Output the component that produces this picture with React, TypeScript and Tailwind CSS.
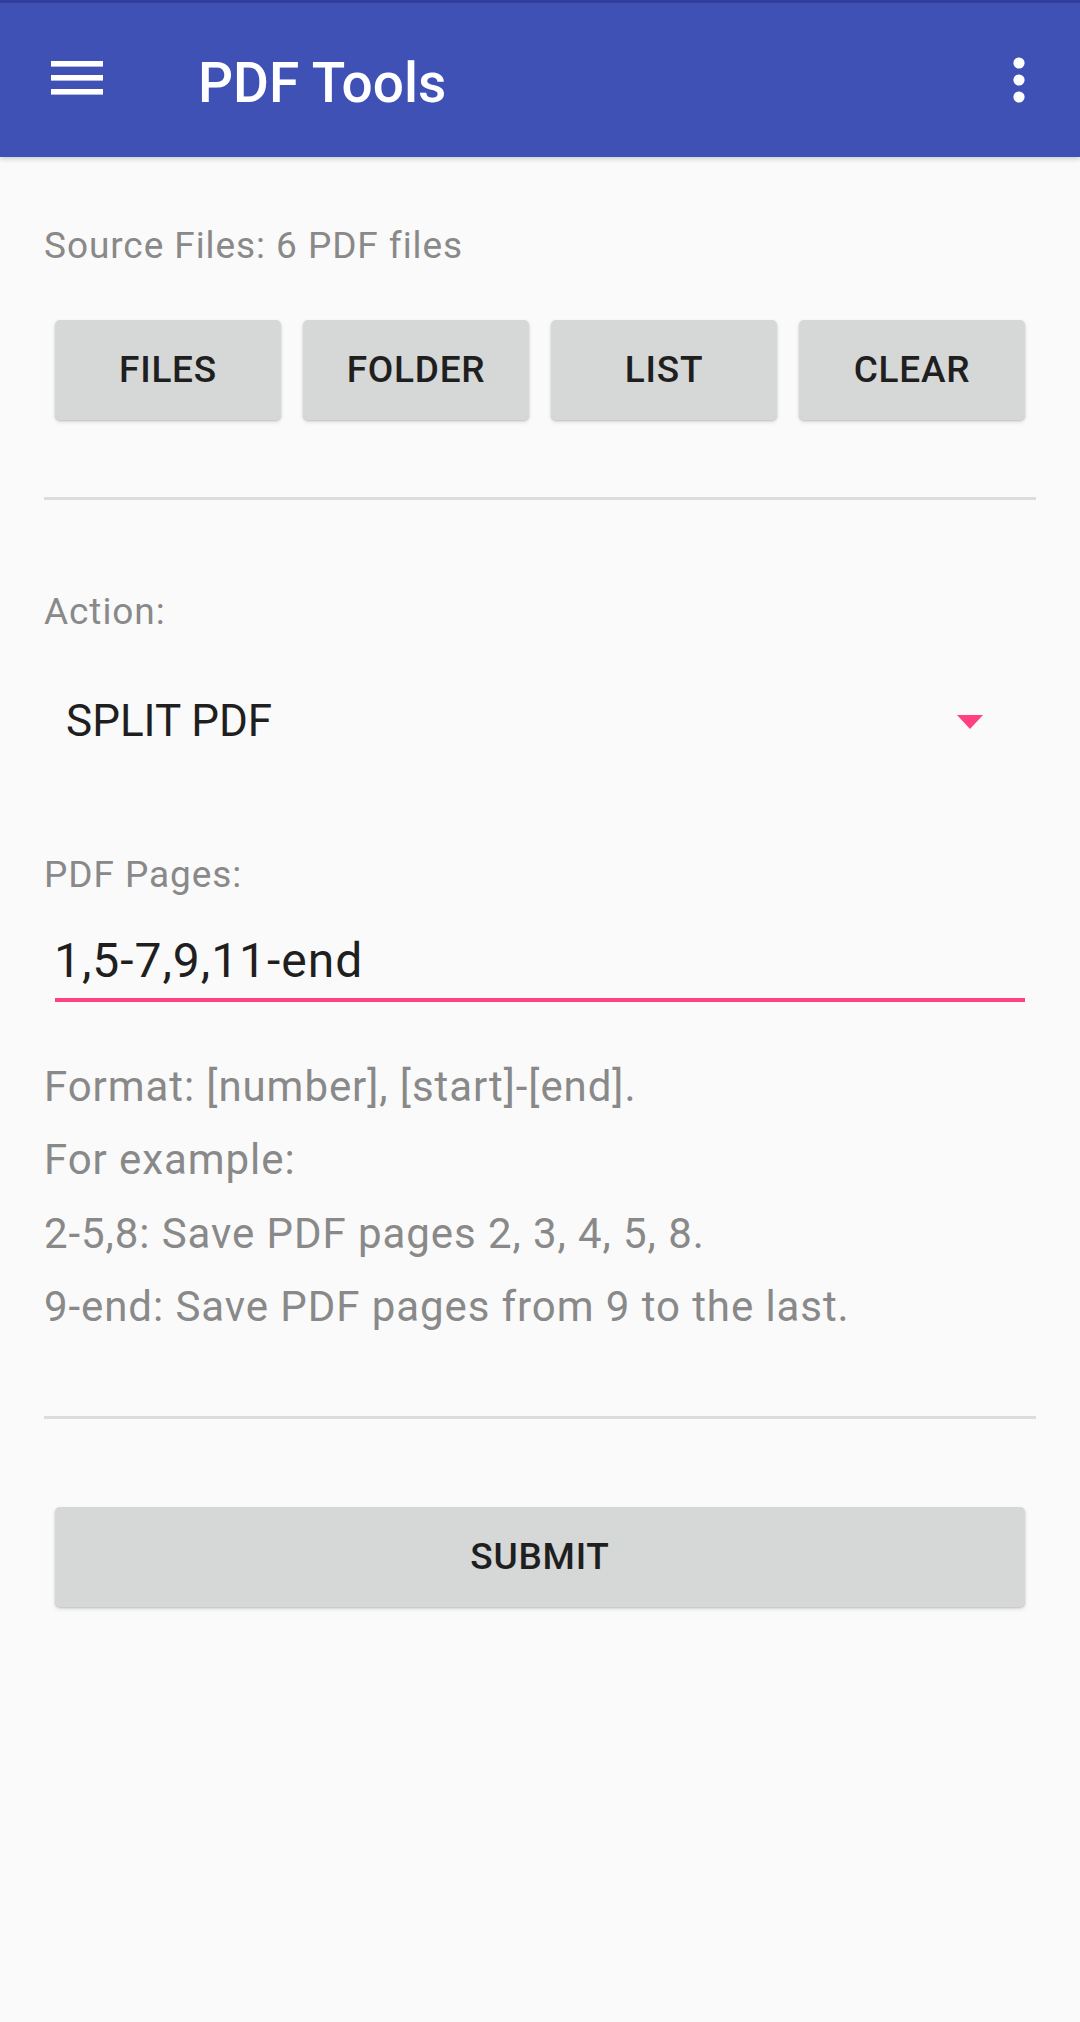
import React from 'react';

const sourceButtons = ['FILES', 'FOLDER', 'LIST', 'CLEAR'];

const helpLines = [
  'Format: [number], [start]-[end].',
  'For example:',
  '2-5,8: Save PDF pages 2, 3, 4, 5, 8.',
  '9-end: Save PDF pages from 9 to the last.',
];

function RaisedButton({ label }: { label: string }) {
  return (
    <button className="h-[100px] w-full rounded-[5px] bg-[#d6d7d7] text-[37px] font-medium leading-[44px] tracking-[0.02em] text-[#1f1f1f] shadow-[0_1px_2px_rgba(0,0,0,0.14),0_2px_4px_rgba(0,0,0,0.12)]">
      {label}
    </button>
  );
}

function Divider({ className }: { className: string }) {
  return <div className={`h-[3px] bg-[#dcdcdc] ${className}`} />;
}

export default function App() {
  return (
    <div className="min-h-[2022px] w-full bg-[#fafafa] font-['Roboto',sans-serif]">
      {/* toolbar */}
      <header className="relative z-10 flex h-[157px] items-start border-t-[3px] border-[#303f9f] bg-[#3f51b5] shadow-[0_2px_5px_rgba(0,0,0,0.18)]">
        <svg className="ml-[51px] mt-[58px] shrink-0" width="52" height="34" viewBox="0 0 52 34" fill="#ffffff">
          <rect x="0" y="0" width="52" height="5.6" />
          <rect x="0" y="14" width="52" height="5.6" />
          <rect x="0" y="28" width="52" height="5.6" />
        </svg>
        <h1 className="ml-[95px] mt-[48px] text-[55px] font-medium leading-[64px] text-white">PDF Tools</h1>
        <svg className="ml-auto mr-[55px] mt-[54px] shrink-0" width="12" height="46" viewBox="0 0 12 46" fill="#ffffff">
          <circle cx="6" cy="6" r="5.6" />
          <circle cx="6" cy="23" r="5.6" />
          <circle cx="6" cy="40" r="5.6" />
        </svg>
      </header>

      <main className="px-[44px]">
        <p className="mt-[67px] text-[37px] leading-[44px] tracking-[0.025em] text-[#898989]">Source Files: 6 PDF files</p>

        <div className="mt-[52px] grid grid-cols-4 gap-[22px] px-[11px]">
          {sourceButtons.map(b => (
            <RaisedButton key={b} label={b} />
          ))}
        </div>

        <Divider className="mt-[77px]" />

        <p className="mt-[90px] text-[37px] leading-[44px] tracking-[0.025em] text-[#898989]">Action:</p>

        <div className="mt-[61px] flex items-center justify-between pl-[22px] pr-[53px]">
          <span className="text-[44px] leading-[53px] text-[#1f1f1f]">SPLIT PDF</span>
          <svg width="26" height="14" viewBox="0 0 26 14" fill="#ff4081">
            <path d="M0 0 L26 0 L13 14 Z" />
          </svg>
        </div>

        <p className="mt-[105px] text-[37px] leading-[44px] tracking-[0.025em] text-[#898989]">PDF Pages:</p>

        <div className="mx-[11px] mt-[36px]">
          <div className="-ml-[1px] text-[48px] leading-[56px] tracking-[0.02em] text-[#1f1f1f]">1,5-7,9,11-end</div>
          <div className="mt-[9px] h-[4px] bg-[#ff4081]" />
        </div>

        <div className="mt-[48px] text-[42px] leading-[73.3px] tracking-[0.022em] text-[#898989]">
          {helpLines.map(line => (
            <p key={line}>{line}</p>
          ))}
        </div>

        <Divider className="mt-[73px]" />

        <div className="mt-[88px] px-[11px]">
          <RaisedButton label="SUBMIT" />
        </div>
      </main>
    </div>
  );
}
